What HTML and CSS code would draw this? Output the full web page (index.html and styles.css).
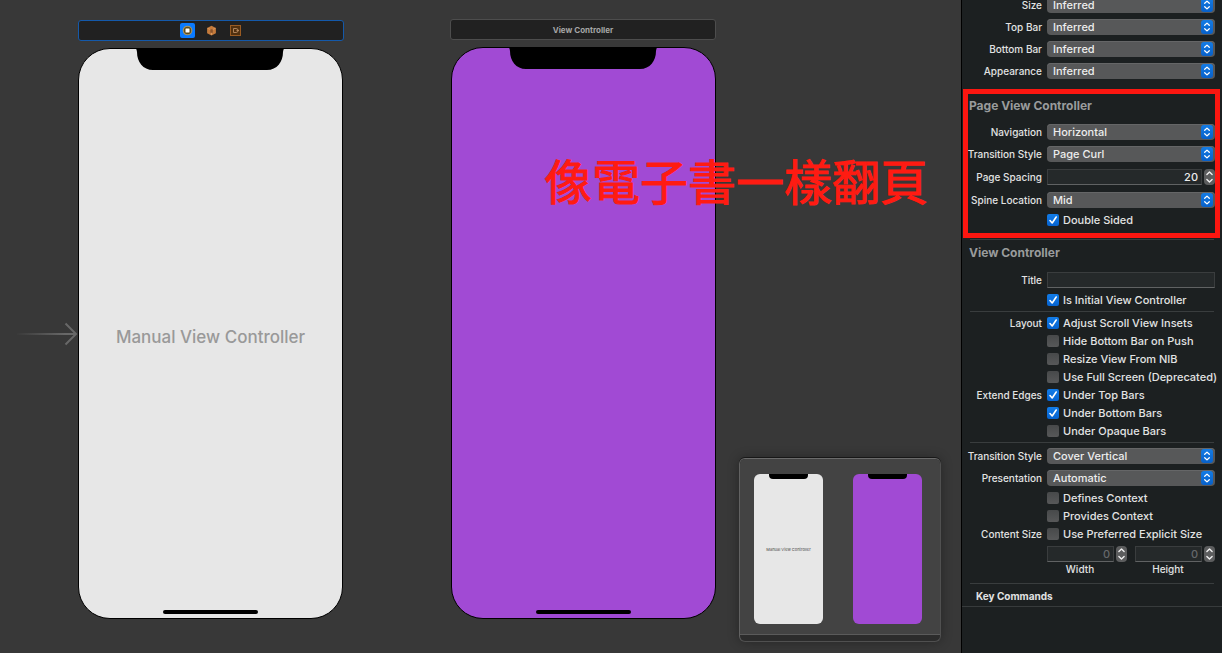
FILE: index.html
```html
<!DOCTYPE html>
<html lang="zh-Hant">
<head>
<meta charset="utf-8">
<title>Storyboard</title>
<link rel="stylesheet" href="styles.css">
</head>
<body>
<svg class="symbols" aria-hidden="true">
  <symbol id="updown" viewBox="0 0 12 14">
    <path d="M3.7 5.3 6 3.1l2.3 2.2M3.7 8.7 6 10.9l2.3-2.2" fill="none" stroke="#fff" stroke-width="1.3" stroke-linecap="round" stroke-linejoin="round"/>
  </symbol>
  <symbol id="up" viewBox="0 0 11 8"><path d="M2.9 5.4 5.5 2.9l2.6 2.5" fill="none" stroke="#f0f0f0" stroke-width="1.4" stroke-linecap="round" stroke-linejoin="round"/></symbol>
  <symbol id="down" viewBox="0 0 11 8"><path d="M2.9 2.6 5.5 5.1l2.6-2.5" fill="none" stroke="#f0f0f0" stroke-width="1.4" stroke-linecap="round" stroke-linejoin="round"/></symbol>
  <symbol id="notch" viewBox="0 0 150 22">
    <path d="M0 0H150Q148 1 148 4C148 14 142 22 132 22H18C8 22 2 14 2 4Q2 1 0 0Z" fill="#000"/>
  </symbol>
</svg>
<div class="workspace">
  <main class="canvas">
    <svg class="entry-arrow" viewBox="0 0 64 24" aria-hidden="true">
      <defs><linearGradient id="fade" gradientUnits="userSpaceOnUse" x1="0" y1="0" x2="50" y2="0"><stop offset="0" stop-color="#666" stop-opacity="0"/><stop offset="1" stop-color="#686868"/></linearGradient></defs>
      <path d="M2 12H61" stroke="url(#fade)" stroke-width="2" fill="none"/>
      <path d="M50.500 1.500 61 12 50.500 22.500" stroke="#686868" stroke-width="2" fill="none"/>
    </svg>

    <section class="scene scene-page">
      <header class="scene-bar selected">
        <svg class="dock-icon active" viewBox="0 0 15 15" aria-hidden="true"><rect width="15" height="15" rx="2" fill="#0a7aff"/><circle cx="7.500" cy="7.500" r="4.300" fill="#5c4a19" stroke="#a99663" stroke-width="1.100"/><rect x="5.500" y="5.500" width="4" height="4" rx=".5" fill="#fff"/></svg>
        <svg class="dock-icon" viewBox="0 0 15 15" aria-hidden="true"><path d="M7.500 2.800 11.900 5v5.200l-4.400 2.400-4.400-2.400V5Z" fill="#c47a3b"/><path d="M3.600 5.300 7.500 7l3.900-1.700M7.500 7v5" fill="none" stroke="#e0a56f" stroke-width=".7"/><path d="M6.300 6.200h2.500v3.600H6.300Z" fill="#8b542b"/></svg>
        <svg class="dock-icon" viewBox="0 0 15 15" aria-hidden="true"><rect x="2.500" y="2.500" width="10" height="10" fill="#51300f" stroke="#9a5b22"/><path d="M5.500 5.500h2.600a2 2 0 0 1 0 4H5.500ZM8.500 7.500h2.500" fill="none" stroke="#b98b62" stroke-width=".9"/></svg>
      </header>
      <div class="phone">
        <svg class="notch" aria-hidden="true"><use href="#notch"/></svg>
        <p class="placeholder">Manual View Controller</p>
        <span class="home"></span>
      </div>
    </section>

    <section class="scene scene-view">
      <header class="scene-bar">View Controller</header>
      <div class="phone purple">
        <svg class="notch" aria-hidden="true"><use href="#notch"/></svg>
        <span class="home"></span>
      </div>
    </section>

    <aside class="minimap">
      <div class="minimap-view">
        <div class="mini"><span class="mini-notch"></span><span class="mini-text">Manual View Controller</span></div>
        <div class="mini purple"><span class="mini-notch"></span></div>
      </div>
    </aside>

    <p class="caption">像電子書一樣翻頁</p>
  </main>

  <form class="inspector">
    <section class="metrics">
      <div class="row"><label class="name" for="size">Size</label><div class="popup"><select id="size"><option>Inferred</option></select><svg><use href="#updown"/></svg></div></div>
      <div class="row"><label class="name" for="top">Top Bar</label><div class="popup"><select id="top"><option>Inferred</option></select><svg><use href="#updown"/></svg></div></div>
      <div class="row"><label class="name" for="bottom">Bottom Bar</label><div class="popup"><select id="bottom"><option>Inferred</option></select><svg><use href="#updown"/></svg></div></div>
      <div class="row"><label class="name" for="look">Appearance</label><div class="popup"><select id="look"><option>Inferred</option></select><svg><use href="#updown"/></svg></div></div>
    </section>

    <section class="page-controller">
      <h2>Page View Controller</h2>
      <div class="row"><label class="name" for="nav">Navigation</label><div class="popup"><select id="nav"><option>Horizontal</option></select><svg><use href="#updown"/></svg></div></div>
      <div class="row"><label class="name" for="curl">Transition Style</label><div class="popup"><select id="curl"><option>Page Curl</option></select><svg><use href="#updown"/></svg></div></div>
      <div class="row tall"><label class="name" for="spacing">Page Spacing</label><div class="number"><input id="spacing" type="text" value="20"><span class="stepper"><button type="button" aria-label="Increase spacing"><svg><use href="#up"/></svg></button><button type="button" aria-label="Decrease spacing"><svg><use href="#down"/></svg></button></span></div></div>
      <div class="row"><label class="name" for="spine">Spine Location</label><div class="popup"><select id="spine"><option>Mid</option></select><svg><use href="#updown"/></svg></div></div>
      <div class="row short"><label class="check"><input type="checkbox" checked>Double Sided</label></div>
    </section>

    <hr>
    <section class="view-controller">
      <h2>View Controller</h2>
      <div class="row"><label class="name" for="title">Title</label><input class="field" id="title" type="text"></div>
      <div class="row short"><label class="check"><input type="checkbox" checked>Is Initial View Controller</label></div>
    </section>
    <hr>
    <section class="group">
      <div class="row short"><span class="name">Layout</span><label class="check"><input type="checkbox" checked>Adjust Scroll View Insets</label></div>
      <div class="row short"><label class="check"><input type="checkbox">Hide Bottom Bar on Push</label></div>
      <div class="row short"><label class="check"><input type="checkbox">Resize View From NIB</label></div>
      <div class="row short"><label class="check"><input type="checkbox">Use Full Screen (Deprecated)</label></div>
      <div class="row short"><span class="name">Extend Edges</span><label class="check"><input type="checkbox" checked>Under Top Bars</label></div>
      <div class="row short"><label class="check"><input type="checkbox" checked>Under Bottom Bars</label></div>
      <div class="row short"><label class="check"><input type="checkbox">Under Opaque Bars</label></div>
    </section>
    <hr>
    <section class="group last">
      <div class="row"><label class="name" for="cover">Transition Style</label><div class="popup"><select id="cover"><option>Cover Vertical</option></select><svg><use href="#updown"/></svg></div></div>
      <div class="row"><label class="name" for="present">Presentation</label><div class="popup"><select id="present"><option>Automatic</option></select><svg><use href="#updown"/></svg></div></div>
      <div class="row short"><label class="check"><input type="checkbox">Defines Context</label></div>
      <div class="row short"><label class="check"><input type="checkbox">Provides Context</label></div>
      <div class="row short"><span class="name">Content Size</span><label class="check"><input type="checkbox">Use Preferred Explicit Size</label></div>
      <div class="row sizes">
        <div class="size-pair">
          <div class="size"><div class="number"><input id="width" type="text" value="0" disabled><span class="stepper"><button type="button" aria-label="Increase width"><svg><use href="#up"/></svg></button><button type="button" aria-label="Decrease width"><svg><use href="#down"/></svg></button></span></div><label for="width">Width</label></div>
          <div class="size"><div class="number"><input id="height" type="text" value="0" disabled><span class="stepper"><button type="button" aria-label="Increase height"><svg><use href="#up"/></svg></button><button type="button" aria-label="Decrease height"><svg><use href="#down"/></svg></button></span></div><label for="height">Height</label></div>
        </div>
      </div>
    </section>
    <hr>
    <h3>Key Commands</h3>
  </form>
</div>
</body>
</html>
```
FILE: styles.css
```css
* { box-sizing: border-box; }

body {
  margin: 0;
  background: #383838;
  font-family: Inter, "Liberation Sans", sans-serif;
  font-size: 11px;
  color: #e2e3e3;
}

.symbols { position: absolute; width: 0; height: 0; }
h2, h3, p { margin: 0; }

.workspace {
  display: grid;
  grid-template-columns: minmax(0, 1fr) 261px;
  height: 100vh;
  overflow: hidden;
}

/* Canvas */
.canvas { position: relative; overflow: hidden; background: #383838; }

.entry-arrow { position: absolute; left: 15px; top: 322px; width: 64px; height: 24px; }

.scene { position: absolute; width: 266px; }
.scene-page { left: 78px; top: 20px; }
.scene-view { left: 450px; top: 19px; }

.scene-bar {
  display: flex;
  align-items: center;
  justify-content: center;
  gap: 9px;
  height: 21px;
  border: 1px solid #4d4d4d;
  border-radius: 3px;
  background: #212121;
  color: #a6a6a6;
  font-size: 8px;
  font-weight: 700;
}
.scene-bar.selected { border-color: #1459aa; }
.dock-icon { width: 15px; height: 15px; }

.phone {
  position: relative;
  display: flex;
  align-items: center;
  justify-content: center;
  width: 265px;
  height: 572px;
  margin-top: 7px;
  border: 1px solid #000;
  border-radius: 32px;
  background: #e7e7e7;
}
.scene-page .phone { height: 571px; }
.scene-view .phone { margin-left: auto; }
.phone.purple, .mini.purple { background: #a14ad4; }
.notch { position: absolute; top: -1px; left: 56px; width: 150px; height: 22px; }
.placeholder { padding-top: 7px; color: #999; font-size: 17px; font-weight: 500; }
.home {
  position: absolute;
  bottom: 4px;
  left: 84px;
  width: 95px;
  height: 4px;
  border-radius: 2px;
  background: #000;
}

.caption {
  position: absolute;
  left: 544px;
  top: 144px;
  color: #ff1b12;
  font-family: "Noto Sans CJK TC", sans-serif;
  font-size: 48px;
  font-weight: 400;
  line-height: 70px;
  white-space: nowrap;
  -webkit-text-stroke: 1px #ff1b12;
}

.minimap {
  position: absolute;
  right: 20px;
  bottom: 11px;
  width: 202px;
  height: 184px;
  padding-bottom: 6px;
  border: 1px solid #505050;
  border-top-color: #6b6b6b;
  border-left-color: #626262;
  border-radius: 6px;
  background: #2c2c2c;
  box-shadow: 0 0 12px #0005, 0 -1px 0 #1c1c1c;
}
.minimap-view {
  display: flex;
  gap: 30px;
  height: 100%;
  padding: 15px 14px 10px;
  border-bottom: 1px solid #5b5b5b;
  border-radius: 5px 5px 0 0;
  background: #434343;
}
.mini {
  display: flex;
  flex-direction: column;
  align-items: center;
  width: 69px;
  height: 150px;
  border-radius: 6px;
  background: #e7e7e7;
}
.mini-notch { width: 39px; height: 5px; border-radius: 0 0 4px 4px; background: #000; }
.mini-text { margin: auto; padding-bottom: 4px; color: #666; font-size: 4px; font-weight: 500; white-space: nowrap; }

/* Inspector */
.inspector { border-left: 1px solid #000; background: #1c2021; overflow: hidden; }

.metrics { margin-top: -6px; }

.row {
  display: grid;
  grid-template-columns: 80px minmax(0, 1fr);
  column-gap: 5px;
  align-items: center;
  height: 22px;
  padding-right: 7px;
}
.row.tall { height: 24px; }
.row.short { height: 18px; }
.name { text-align: right; font-size: 10px; font-weight: 500; white-space: nowrap; }
.popup, .number, .field, .check, .size-pair { grid-column: 2; }

.inspector h2 {
  padding-left: 7px;
  color: #999b9c;
  font-size: 12px;
  font-weight: 700;
  line-height: 16px;
}
.inspector h3 {
  padding: 2px 14px 0;
  border-bottom: 1px solid #373b3c;
  font-size: 10px;
  font-weight: 700;
  line-height: 20px;
}
hr { height: 1px; margin: 0 8px; border: 0; background: #393d3e; }

.page-controller { position: relative; padding: 16px 0 10px; }
.page-controller::after {
  content: "";
  position: absolute;
  inset: 7px 2px 1px 1px;
  border: 5px solid #fb1610;
  pointer-events: none;
}
.page-controller h2 { margin-bottom: 7px; }
.view-controller { padding: 5px 0 2px; }
.view-controller h2 { margin-bottom: 8px; }
.group { padding: 2px 0; }
.group.last { padding-bottom: 7px; }

.popup { position: relative; height: 16px; }
.popup select {
  display: block;
  width: 100%;
  height: 16px;
  padding: 0 20px 0 6px;
  border: 0;
  border-radius: 4px;
  appearance: none;
  background: #575859;
  box-shadow: inset 0 1px 0 #656667;
  color: #ededed;
  font: 500 11px/16px Inter, "Liberation Sans", sans-serif;
}
.popup svg {
  position: absolute;
  top: 1px;
  right: 2px;
  width: 12px;
  height: 14px;
  border-radius: 3px;
  background: linear-gradient(#147ce5, #0760c9);
  pointer-events: none;
}

.number { display: flex; gap: 2px; }
.number input, .field {
  flex: 1;
  width: 100%;
  min-width: 0;
  height: 16px;
  padding: 0 3px;
  border: 1px solid #3a3d3e;
  border-bottom-color: #606263;
  border-radius: 0;
  background: #25292a;
  color: #ededed;
  font: 500 11px/14px Inter, "Liberation Sans", sans-serif;
}
.number input { text-align: right; }
.number input:disabled { color: #65686a; }

.stepper {
  display: flex;
  flex-direction: column;
  width: 11px;
  height: 16px;
  overflow: hidden;
  border-radius: 4px;
  background: #5c5d5e;
}
.stepper button { height: 8px; padding: 0; border: 0; background: none; }
.stepper svg { display: block; width: 11px; height: 8px; }

.check { display: flex; align-items: center; gap: 4px; font-weight: 500; white-space: nowrap; }
.check input {
  flex: none;
  width: 12px;
  height: 12px;
  margin: 0;
  border-radius: 2px;
  appearance: none;
  background: linear-gradient(#47494a, #575859);
}
.check input:checked {
  background: url("data:image/svg+xml,%3Csvg xmlns='http://www.w3.org/2000/svg' viewBox='0 0 12 12'%3E%3Cpath d='M3 6.500 5.200 9 9.200 3' fill='none' stroke='white' stroke-width='1.600' stroke-linecap='round' stroke-linejoin='round'/%3E%3C/svg%3E"), linear-gradient(#127ce8, #0663d0);
}

.row.sizes { height: 33px; align-items: start; padding-top: 3px; }
.size-pair { display: grid; grid-template-columns: 1fr 1fr; gap: 8px; }
.size { display: flex; flex-direction: column; }
.size label { padding-right: 14px; font-size: 10px; font-weight: 500; line-height: 14px; text-align: center; }
```
